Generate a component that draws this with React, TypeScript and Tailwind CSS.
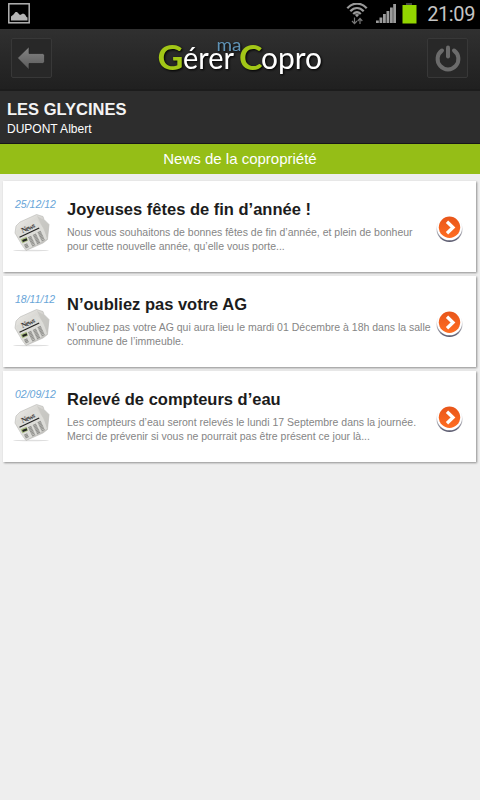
import React from "react";

type NewsItem = {
  date: string;
  title: string;
  lines: string[];
};

const news: NewsItem[] = [
  {
    date: "25/12/12",
    title: "Joyeuses fêtes de fin d’année !",
    lines: [
      "Nous vous souhaitons de bonnes fêtes de fin d’année, et plein de bonheur",
      "pour cette nouvelle année, qu’elle vous porte...",
    ],
  },
  {
    date: "18/11/12",
    title: "N’oubliez pas votre AG",
    lines: [
      "N’oubliez pas votre AG qui aura lieu le mardi 01 Décembre à 18h dans la salle",
      "commune de l’immeuble.",
    ],
  },
  {
    date: "02/09/12",
    title: "Relevé de compteurs d’eau",
    lines: [
      "Les compteurs d’eau seront relevés le lundi 17 Septembre dans la journée.",
      "Merci de prévenir si vous ne pourrait pas être présent ce jour là...",
    ],
  },
];

function StatusBar() {
  return (
    <div className="flex h-[29px] items-center bg-black pl-2 pr-[5px]">
      <svg className="mt-[-2px]" width="22" height="21" viewBox="0 0 22 21">
        <rect x="0.8" y="0.8" width="20.4" height="19" fill="none" stroke="#b4b4b4" strokeWidth="1.5" />
        <path d="M3 17.500v-4l2.500-2 2-2.500 1.500 0 3 3 3-1.500 2 1 1.500 2.500 1 .5v3z" fill="#b4b4b4" />
      </svg>
      <div className="flex-1" />
      <svg className="mr-[8px]" width="22" height="23" viewBox="0 0 22 23">
        <g fill="none" stroke="#999" strokeWidth="2.300">
          <path d="M1.300 5.200C7-.9 15-.9 20.700 5.200" />
          <path d="M4.300 8.200C8.500 4 13.500 4 17.700 8.200" />
          <path d="M7.200 11c2.400-2.200 5.200-2.200 7.600 0" />
        </g>
        <path d="M8.800 11.800q2.200-1.500 4.400 0L11 14.300z" fill="#999" />
        <path d="M8.500 14.500v6M6 18l2.500 2.700L11 18M14 21v-5.500M11.700 18l2.300-2.600 2.300 2.600" fill="none" stroke="#777" strokeWidth="1.200" />
      </svg>
      <svg className="mr-[6px] mt-[-1px]" width="20" height="20" viewBox="0 0 20 20" fill="#9b9b9b">
        <rect x="0" y="16.500" width="2.800" height="2.500" />
        <rect x="3.500" y="13.500" width="2.800" height="5.500" />
        <rect x="7" y="10" width="2.800" height="9" />
        <rect x="10.500" y="7" width="2.800" height="12" />
        <rect x="14" y="3.500" width="2.800" height="15.500" />
        <rect x="17.200" y="0" width="2.800" height="19" />
      </svg>
      <svg className="mr-[10px] mt-[-3px]" width="15" height="21" viewBox="0 0 15 21">
        <rect x="4" y="0" width="6" height="2" fill="#444" />
        <rect x="0.500" y="2" width="14" height="18.500" fill="#93d500" />
      </svg>
      <span className="font-[Roboto,sans-serif] text-[20px] leading-[27px] tracking-[-0.4px] text-[#c4c4c4]">21:09</span>
    </div>
  );
}

function Logo() {
  return (
    <svg className="mt-[-7px] drop-shadow-[1px_1px_1px_#000]" width="170" height="56" viewBox="156 29 170 56" fontFamily="Lato, sans-serif">
      <text x="217.500" y="51" fontSize="18" fill="#5f92b5" textLength="25" lengthAdjust="spacingAndGlyphs">ma</text>
      <text x="158.500" y="69.500" fontSize="34" fontWeight="700" fill="#a2c617" textLength="26" lengthAdjust="spacingAndGlyphs">G</text>
      <text x="184" y="69" fontSize="31" fill="#fff" textLength="51" lengthAdjust="spacingAndGlyphs">érer</text>
      <text x="240" y="69.500" fontSize="34" fontWeight="700" fill="#a2c617" textLength="23.5" lengthAdjust="spacingAndGlyphs">C</text>
      <text x="262" y="69" fontSize="31" fill="#fff" textLength="61" lengthAdjust="spacingAndGlyphs">opro</text>
    </svg>
  );
}

function Header() {
  return (
    <header className="flex h-[62px] items-start justify-between border-b-2 border-[#1c1c1c] bg-linear-to-b from-[#303030] to-[#202020] pl-[11px] pr-[12px] pt-[7px]">
      <button className="mt-[2px] flex h-[40px] w-[41px] items-center justify-center rounded-[2px] border border-[#383838] bg-[#282828]">
        <svg width="29" height="25" viewBox="0 0 29 25">
          <path d="M.5 12 12 .8v6.700h13.500q2 0 2 2v6q0 2-2 2H12v6.200z" fill="url(#arrow)" stroke="#1b1b1b" strokeWidth=".6" />
          <defs>
            <linearGradient id="arrow" x2="0" y2="1">
              <stop stopColor="#858585" />
              <stop offset="1" stopColor="#5a5a5a" />
            </linearGradient>
          </defs>
        </svg>
      </button>
      <Logo />
      <button className="mt-[2px] flex h-[40px] w-[41px] items-center justify-center rounded-[2px] border border-[#383838] bg-[#282828]">
        <svg className="mt-[-1px]" width="28" height="28" viewBox="0 0 28 28" fill="none" stroke="#6b6b6b" strokeWidth="4" strokeLinecap="round">
          <path d="M8 6.500a10.400 10.400 0 1 0 12 0" />
          <path d="M14 3.500v9" />
        </svg>
      </button>
    </header>
  );
}

function NewspaperIcon() {
  return (
    <svg width="38" height="41" viewBox="0 0 38 41">
      <defs>
        <linearGradient id="paper" x2="1" y2="1">
          <stop stopColor="#eeede9" />
          <stop offset="1" stopColor="#b9b8b4" />
        </linearGradient>
      </defs>
      <ellipse cx="18" cy="39.500" rx="18" ry=".8" fill="#dedede" />
      <path d="M3 15 7 11 23.500 3.500 30 5.500l1 3 5 5-1.500 15-4.500 3.500L13 39.500 9 34 2 22z" fill="url(#paper)" stroke="#b9b9b5" strokeWidth=".6" />
      <path d="m3 20 21-11 7 8.500 3 10.500-21 11L8 33z" fill="#dcdcd8" />
      <path d="m24 5 7 4 4.500 5-1 13-4-9z" fill="#c5c4c0" opacity=".7" />
      <path d="M6.500 26.200 26.200 17" stroke="#222" strokeWidth="1.200" />
      <text x="9.500" y="22" fontSize="7.500" fontWeight="700" fontFamily="Liberation Serif, serif" fill="#3b3b3b" transform="rotate(-24 9.500 22)" textLength="14.500">News</text>
      <path d="m7.500 28.500 6-2.800 1.500 4-5.500 2.600z" fill="#a9bd80" />
      <path d="m9.500 30 4.500-1.700" stroke="#222" strokeWidth="2" />
      <g stroke="#92928f" strokeWidth="3.500" strokeDasharray="1.200 .3">
        <path d="m16.500 25.500 4.500 9.500M21.300 23.200l4.500 9.500M26 20.500l4.500 9.500" />
        <path d="m12.500 33 2 4" />
      </g>
    </svg>
  );
}

function ArrowBadge() {
  return (
    <svg width="28" height="29" viewBox="0 0 28 29">
      <defs>
        <linearGradient id="orange" x2="0" y2="1">
          <stop stopColor="#e8561a" />
          <stop offset="1" stopColor="#ff6d22" />
        </linearGradient>
        <linearGradient id="ring" x2="0" y2="1">
          <stop offset=".2" stopColor="#ffffff" />
          <stop offset=".6" stopColor="#b0b0b8" />
          <stop offset="1" stopColor="#55556a" />
        </linearGradient>
      </defs>
      <circle cx="14.500" cy="14" r="13" fill="url(#ring)" />
      <circle cx="14.500" cy="12.800" r="12.500" fill="#fff" />
      <circle cx="14.500" cy="12.300" r="10.700" fill="url(#orange)" />
      <path d="m12 6.700 6 5.800-6 5.800" fill="none" stroke="#fff" strokeWidth="3.300" />
    </svg>
  );
}

function NewsCard({ item }: { item: NewsItem }) {
  return (
    <article className="flex h-[91px] bg-white shadow-[1px_1px_2px_rgba(0,0,0,0.4)]">
      <div className="w-[64px] shrink-0 pl-[10px] pt-[16px]">
        <p className="pl-[2px] text-[10.5px] italic leading-[14px] whitespace-nowrap text-[#68a5d8]">{item.date}</p>
        <NewspaperIcon />
      </div>
      <div className="min-w-0 flex-1 pt-[17px]">
        <h2 className="text-[16.5px] font-bold leading-[23px] whitespace-nowrap text-[#1c1c1c]">{item.title}</h2>
        <div className="pt-[4px] text-[10.5px] leading-[14px] whitespace-nowrap text-[#858585]">
          {item.lines.map((line) => (
            <p key={line}>{line}</p>
          ))}
        </div>
      </div>
      <div className="shrink-0 pr-[13px] pt-[34px]">
        <ArrowBadge />
      </div>
    </article>
  );
}

export default function App() {
  return (
    <div className="flex h-[800px] w-[480px] flex-col overflow-hidden bg-[#eeeeee] font-['Liberation_Sans',Arial,sans-serif]">
      <StatusBar />
      <Header />
      <section className="h-[53px] border-b border-[#171717] bg-[#2d2d2d] pl-[7px] pt-[8px] text-white">
        <h1 className="text-[16.5px] font-bold leading-[20px] text-[#f4f4f4]">LES GLYCINES</h1>
        <p className="pt-px text-[12px] leading-[18px]">DUPONT Albert</p>
      </section>
      <div className="h-[30px] bg-[#95be17] text-center text-[15px] leading-[30px] text-white">News de la copropriété</div>
      <main className="flex flex-col gap-[4px] pl-[3px] pr-[4px] pt-[7px]">
        {news.map((item) => (
          <NewsCard key={item.date} item={item} />
        ))}
      </main>
    </div>
  );
}
